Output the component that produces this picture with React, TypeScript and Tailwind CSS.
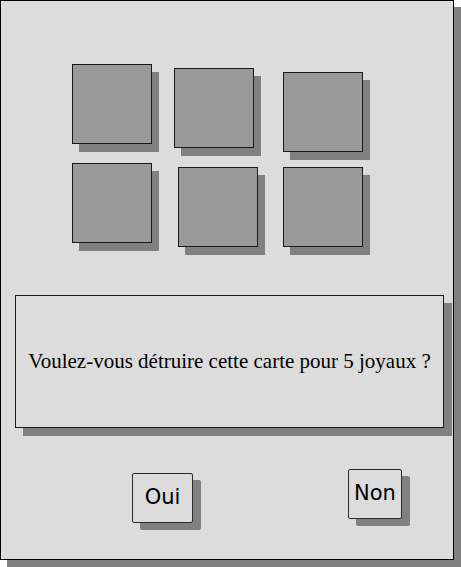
import React from "react";

const card = "w-[80px] h-[80px] shrink-0 bg-[#999999] border border-[#1a1a1a] shadow-[7px_8px_0_#808080]";
const btn =
  "h-[50px] shrink-0 bg-[#dcdcdc] border border-[#2a2a2a] rounded-[2px] shadow-[8px_7px_0_#808080] flex items-center justify-center text-[21px] text-black";

export default function App() {
  return (
    <div className="w-[461px] h-[567px] bg-white">
      <div className="w-[454px] h-[560px] bg-[#dcdcdc] border border-black shadow-[7px_7px_0_#808080] flex flex-col">
        <div className="flex items-start mt-[63px]">
          <div className={`${card} ml-[71px]`} />
          <div className={`${card} ml-[22px] mt-[4px]`} />
          <div className={`${card} ml-[29px] mt-[8px]`} />
        </div>
        <div className="flex items-start mt-[11px]">
          <div className={`${card} ml-[71px]`} />
          <div className={`${card} ml-[26px] mt-[4px]`} />
          <div className={`${card} ml-[25px] mt-[4px]`} />
        </div>
        <div
          className="ml-[14px] mt-[48px] w-[429px] h-[133px] bg-[#dcdcdc] border border-[#1a1a1a] shadow-[8px_8px_0_#808080] flex items-center justify-center text-[21px] text-black"
          style={{ fontFamily: '"Liberation Serif", "Times New Roman", serif' }}
        >
          Voulez-vous détruire cette carte pour 5 joyaux ?
        </div>
        <div
          className="flex items-start mt-[41px]"
          style={{ fontFamily: '"DejaVu Sans", sans-serif' }}
        >
          <div className={`${btn} w-[61px] ml-[131px] mt-[4px]`}>Oui</div>
          <div className={`${btn} w-[54px] ml-[155px]`}>Non</div>
        </div>
      </div>
    </div>
  );
}
